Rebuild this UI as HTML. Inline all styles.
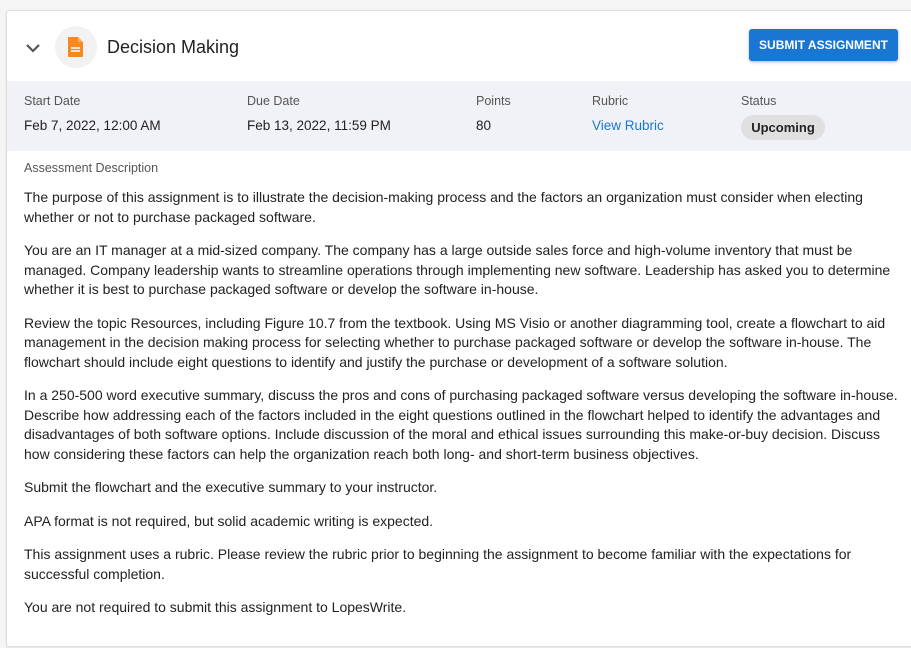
<!DOCTYPE html>
<html><head><meta charset="utf-8"><style>
body{margin:0;background:#f5f5f5;width:911px;height:648px;overflow:hidden;font-family:"Liberation Sans",sans-serif;color:#1f1f1f}
.card{position:absolute;left:6px;top:10px;width:910px;height:635px;background:#fff;border:1px solid #ddd;border-radius:3px;box-shadow:0 1px 2px rgba(0,0,0,.08)}
.chev{position:absolute;left:18px;top:31px}
.ic{position:absolute;left:48px;top:15px;width:42px;height:42px;border-radius:50%;background:#f2f2f2}
.title{position:absolute;left:100px;top:26px;font-size:18px;color:#222}
.btn{position:absolute;left:742px;top:18px;width:149px;height:32px;background:#1976d2;border-radius:3px;color:#fff;font-weight:bold;font-size:12px;line-height:32px;text-align:center;box-shadow:0 1px 3px rgba(0,0,0,.3)}
.band{position:absolute;left:0;top:70px;width:905px;height:70px;background:#f1f2f7}
.lab{position:absolute;top:83px;font-size:12.5px;color:#555}
.val{position:absolute;top:107px;font-size:13.5px;color:#222}
.pill{position:absolute;left:734px;top:104px;width:84px;height:25px;border-radius:13px;background:#e0e0e0;font-size:13px;text-align:center;line-height:25px;font-weight:bold;color:#222}
.desc{position:absolute;left:17px;top:150px;font-size:12.5px;color:#555}
.txt{position:absolute;left:17px;top:177px;font-size:14px;line-height:19.5px;letter-spacing:0;white-space:nowrap;color:#222}
.txt p{margin:0 0 14px}
</style></head><body>
<div class="card">
<svg class="chev" width="16" height="12" viewBox="0 0 16 12"><path d="M2 3l6 6 6-6" fill="none" stroke="#555" stroke-width="2.2"/></svg>
<div class="ic"><svg width="42" height="42" viewBox="0 0 42 42"><path d="M14 11h9l5 5v14a1 1 0 0 1-1 1H14a1 1 0 0 1-1-1V12a1 1 0 0 1 1-1z" fill="#f68a1e"/><path d="M23 11v5h5" fill="#fbb060"/><path d="M16 22h9M16 25h9" stroke="#fff" stroke-width="1.4"/></svg></div>
<div class="title">Decision Making</div>
<div class="btn">SUBMIT ASSIGNMENT</div>
<div class="band"></div>
<div class="lab" style="left:17px">Start Date</div><div class="val" style="left:17px">Feb 7, 2022, 12:00 AM</div>
<div class="lab" style="left:240px">Due Date</div><div class="val" style="left:240px">Feb 13, 2022, 11:59 PM</div>
<div class="lab" style="left:469px">Points</div><div class="val" style="left:469px">80</div>
<div class="lab" style="left:585px">Rubric</div><div class="val" style="left:585px;color:#1976d2">View Rubric</div>
<div class="lab" style="left:734px">Status</div><div class="pill">Upcoming</div>
<div class="desc">Assessment Description</div>
<div class="txt">
<p>The purpose of this assignment is to illustrate the decision-making process and the factors an organization must consider when electing<br>whether or not to purchase packaged software.</p>
<p>You are an IT manager at a mid-sized company. The company has a large outside sales force and high-volume inventory that must be<br>managed. Company leadership wants to streamline operations through implementing new software. Leadership has asked you to determine<br>whether it is best to purchase packaged software or develop the software in-house.</p>
<p>Review the topic Resources, including Figure 10.7 from the textbook. Using MS Visio or another diagramming tool, create a flowchart to aid<br>management in the decision making process for selecting whether to purchase packaged software or develop the software in-house. The<br>flowchart should include eight questions to identify and justify the purchase or development of a software solution.</p>
<p>In a 250-500 word executive summary, discuss the pros and cons of purchasing packaged software versus developing the software in-house.<br>Describe how addressing each of the factors included in the eight questions outlined in the flowchart helped to identify the advantages and<br>disadvantages of both software options. Include discussion of the moral and ethical issues surrounding this make-or-buy decision. Discuss<br>how considering these factors can help the organization reach both long- and short-term business objectives.</p>
<p>Submit the flowchart and the executive summary to your instructor.</p>
<p>APA format is not required, but solid academic writing is expected.</p>
<p>This assignment uses a rubric. Please review the rubric prior to beginning the assignment to become familiar with the expectations for<br>successful completion.</p>
<p>You are not required to submit this assignment to LopesWrite.</p>
</div>
</div>
</body></html>
